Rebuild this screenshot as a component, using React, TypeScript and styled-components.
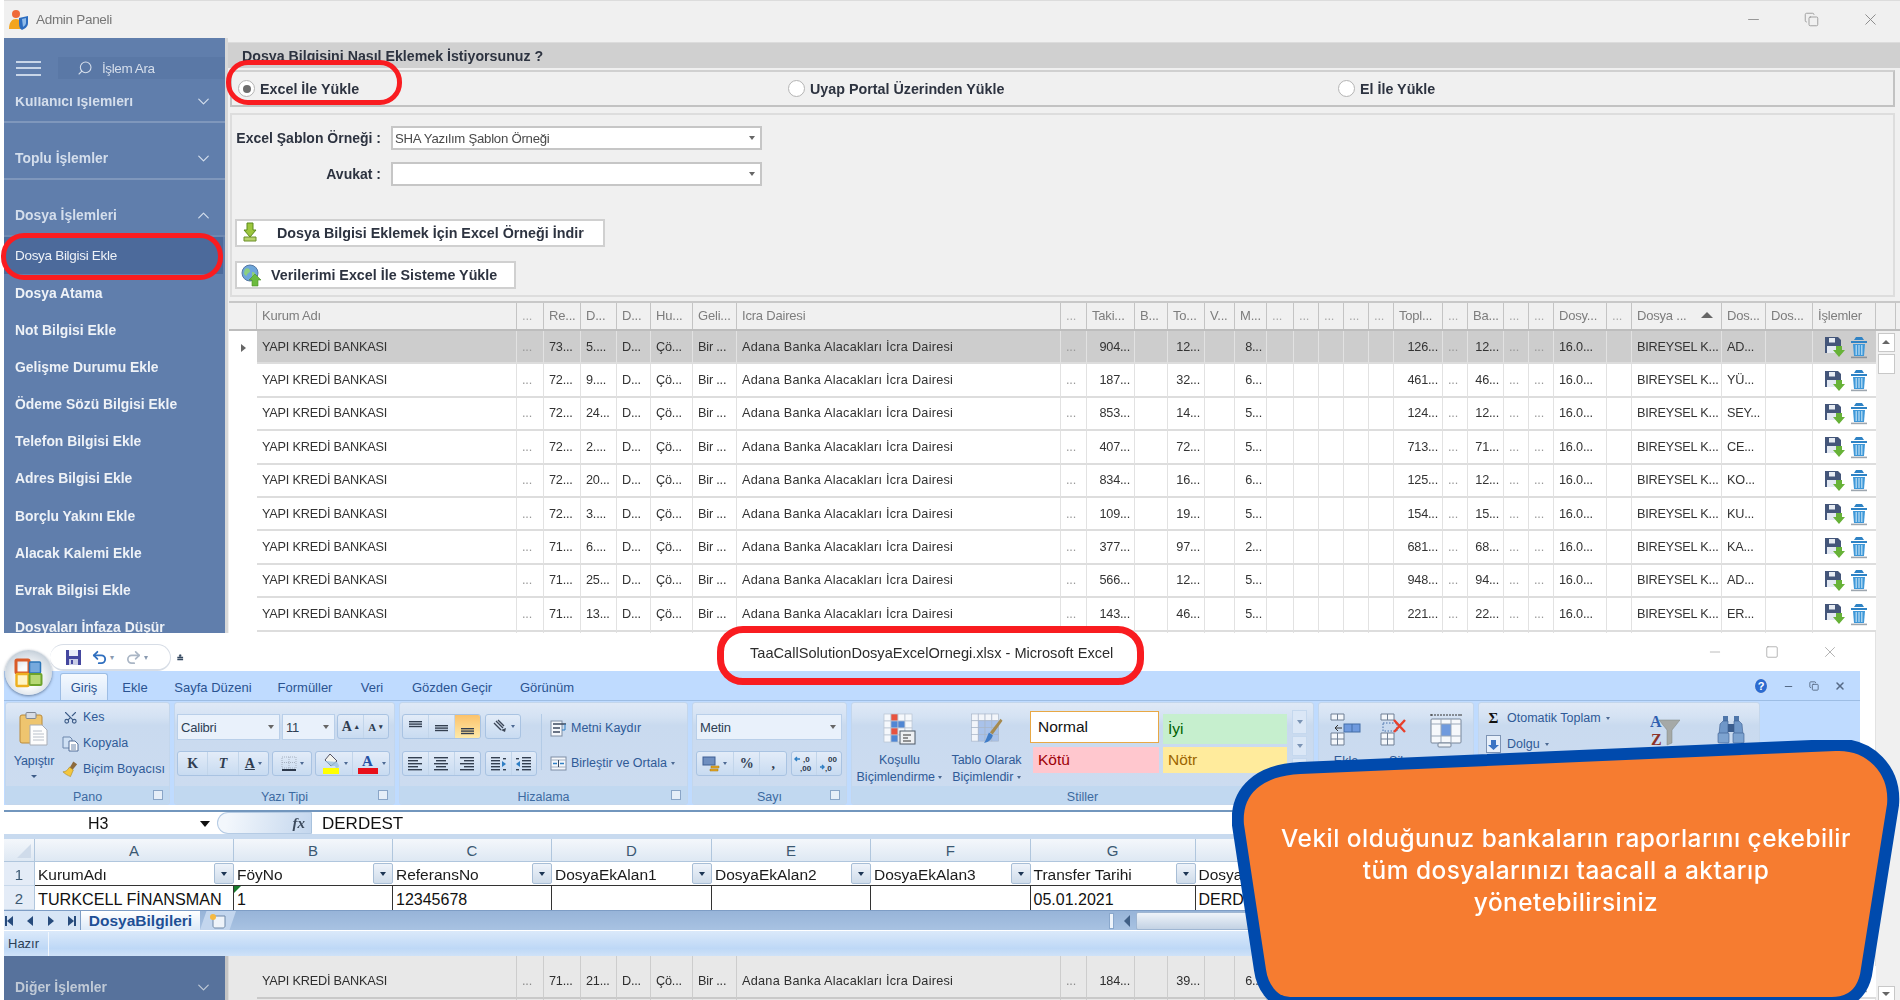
import React from 'react';
import styled, { createGlobalStyle, css } from 'styled-components';
import { ChevronDown, ChevronUp, Minus, Search, Square, X, Copy, Scissors, Undo2, Redo2 } from 'lucide-react';

const Global = createGlobalStyle`
  html, body { margin: 0; padding: 0; background: #fff; }
  #root { width: 1900px; height: 1000px; overflow: hidden; }
  * { box-sizing: border-box; }
`;

const UI = `"Liberation Sans", Arial, sans-serif`;

const Stage = styled.div`
  position: relative;
  width: 1900px;
  height: 1000px;
  overflow: hidden;
  background: #fff;
  font-family: ${UI};
`;

const AppWindow = styled.div`
  margin-left: 4px;
  width: 1896px;
  height: 1000px;
  display: flex;
  flex-direction: column;
  background: #f0f0f0;
  border-top: 1px solid #dcdcdc;
  filter: blur(0.45px);
`;

const TitleBar = styled.div`
  flex: 0 0 37px;
  display: flex;
  align-items: center;
  padding: 0 20px 0 4px;
  color: #777;
  font-size: 13.5px;
`;
const TitleText = styled.span`
  margin-left: 6px;
  letter-spacing: -0.3px;
`;
const WinControls = styled.div`
  margin-left: auto;
  display: flex;
  align-items: center;
  gap: 42px;
  color: #888;
`;

const Body = styled.div`
  flex: 1;
  display: flex;
  min-height: 0;
`;

const Sidebar = styled.nav`
  flex: 0 0 221px;
  height: 962px;
  background: #607eac;
  display: flex;
  flex-direction: column;
  padding-top: 19px;
  color: #e9eef5;
  overflow: hidden;
`;
const SideTop = styled.div`
  flex: 0 0 22px;
  display: flex;
  align-items: center;
`;
const Burger = styled.div`
  width: 25px;
  height: 15px;
  margin: 0 17px 0 12px;
  border-top: 2px solid #c9d6e8;
  border-bottom: 2px solid #c9d6e8;
  position: relative;
  &::after {
    content: '';
    position: absolute;
    left: 0;
    right: 0;
    top: 4.5px;
    height: 2px;
    background: #c9d6e8;
  }
`;
const SearchBox = styled.div`
  flex: 1;
  height: 22px;
  background: #5a78a6;
  display: flex;
  align-items: center;
  padding-left: 19px;
  gap: 9px;
  font-size: 13.5px;
  color: #d5deeb;
  letter-spacing: -0.4px;
`;
const FlippedSearch = styled(Search)`
  transform: scaleX(-1);
`;
const MenuScroll = styled.div`
  flex: 1;
  margin-top: 18px;
  overflow: hidden;
  display: flex;
  flex-direction: column;
  min-height: 0;
`;
const MenuHead = styled.div<{ $first?: boolean; $last?: boolean; $open?: boolean }>`
  flex: 0 0 57px;
  display: flex;
  align-items: center;
  padding: 24px 12px 9px 11px;
  border-bottom: 2px solid #7f97bc;
  font-weight: 700;
  font-size: 13.9px;
  color: #d4deec;
  ${p => p.$first && css`margin-top: -31px;`}
  ${p => p.$open && css`border-bottom-color: #6e89b2;`}
  ${p => p.$last && css`margin-top: auto; margin-bottom: -8px; border-bottom: 0;`}
  & > svg { margin-left: auto; color: #d4deec; }
`;
const MenuItem = styled.div<{ $active?: boolean }>`
  flex: 0 0 37.15px;
  display: flex;
  align-items: center;
  padding-left: 11px;
  font-size: 13.9px;
  font-weight: 700;
  color: #eef2f7;
  ${p => p.$active && css`
    background: #4c6a9b;
    margin-right: 2px;
    font-weight: 400;
    font-size: 13.5px;
    letter-spacing: -0.3px;
  `}
`;

const Main = styled.main`
  flex: 1;
  min-width: 0;
  border-left: 3px solid #d8d8d8;
  display: flex;
  flex-direction: column;
  padding-top: 4px;
`;
const Band = styled.div`
  flex: 0 0 26px;
  background: #d0d0d0;
  display: flex;
  align-items: center;
  padding-left: 14px;
  font-weight: 700;
  font-size: 14.2px;
  color: #2d3340;
  border-top: 1px solid #dcdcdc;
`;
const RadioPanel = styled.div`
  flex: 0 0 37px;
  margin: 2px 5px 0 2px;
  border: 2px solid #c2c2c2;
  border-top-color: #d0d0d0;
  display: grid;
  grid-template-columns: 550px 550px 1fr;
  align-items: center;
  padding-left: 6px;
`;
const RadioOption = styled.label`
  display: flex;
  align-items: center;
  gap: 5px;
  font-weight: 700;
  font-size: 14.3px;
  color: #2d3340;
`;
const RadioDot = styled.span<{ $on?: boolean }>`
  width: 17px;
  height: 17px;
  border-radius: 50%;
  background: #fff;
  border: 1.5px solid #b4b4b4;
  display: flex;
  align-items: center;
  justify-content: center;
  &::after {
    content: '';
    width: 8px;
    height: 8px;
    border-radius: 50%;
    background: ${p => (p.$on ? '#6d6d6d' : 'transparent')};
  }
`;
const FormPanel = styled.section`
  flex: 0 0 184px;
  margin: 6px 5px 0 2px;
  border: 2px solid #dddddd;
  padding: 11px 0 0 3px;
  display: flex;
  flex-direction: column;
`;
const FormRow = styled.div`
  display: flex;
  align-items: center;
  height: 24px;
  margin-bottom: 12px;
`;
const FormLabel = styled.span`
  width: 146px;
  text-align: right;
  font-weight: 700;
  font-size: 14px;
  color: #2d3340;
  margin-right: 10px;
  white-space: nowrap;
`;
const SelectBox = styled.div`
  width: 371px;
  height: 24px;
  background: #fff;
  border: 2px solid #c6c6c6;
  display: flex;
  align-items: center;
  padding: 0 5px 0 2px;
  font-size: 13.2px;
  color: #4a4a4a;
  letter-spacing: -0.25px;
`;
const Caret = styled.span`
  margin-left: auto;
  width: 0;
  height: 0;
  border-left: 3.5px solid transparent;
  border-right: 3.5px solid transparent;
  border-top: 4px solid #666;
`;
const FormButton = styled.button<{ $w: number; $pad: number; $mt: number }>`
  width: ${p => p.$w}px;
  height: 28px;
  margin-top: ${p => p.$mt}px;
  background: #fff;
  border: 2px solid #d0d0d0;
  display: flex;
  align-items: center;
  padding: 0 0 0 4px;
  font-family: ${UI};
  font-weight: 700;
  font-size: 14.3px;
  color: #2d3340;
  white-space: nowrap;
  & > span { margin-left: ${p => p.$pad}px; }
`;

const COLS = '28px 260px 27px 37px 36px 34px 42px 44px 324px 26px 48px 33px 37px 30px 32px 27px 25px 25px 25px 25px 49px 25px 36px 25px 25px 53px 25px 90px 44px 47px 63px';

const Table = styled.section`
  flex: 1;
  margin: 4px 0 0 1px;
  display: flex;
  flex-direction: column;
  border-top: 2px solid #c8c8c8;
  min-height: 0;
  overflow: hidden;
`;
const HeadRow = styled.div`
  flex: 0 0 28px;
  display: grid;
  grid-template-columns: ${COLS} 20px;
  border-bottom: 2px solid #bdbdbd;
`;
const HeadCell = styled.div<{ $dim?: boolean }>`
  display: flex;
  align-items: center;
  padding: 0 0 2px 5px;
  font-size: 13px;
  color: ${p => (p.$dim ? '#aaa' : '#7d7d7d')};
  letter-spacing: -0.2px;
  border-right: 1px solid #c4c4c4;
  white-space: nowrap;
  overflow: hidden;
`;
const SortArrow = styled.span`
  margin-left: auto;
  margin-right: 8px;
  width: 0;
  height: 0;
  border-left: 6px solid transparent;
  border-right: 6px solid transparent;
  border-bottom: 6px solid #666;
`;
const TableBody = styled.div`
  flex: 1;
  display: flex;
  min-height: 0;
`;
const Rows = styled.div`
  flex: 0 0 1647px;
  display: flex;
  flex-direction: column;
`;
const Row = styled.div<{ $tall?: number }>`
  flex: 0 0 ${p => p.$tall ?? 33.4}px;
  display: grid;
  grid-template-columns: ${COLS};
`;
const Indicator = styled.div<{ $on?: boolean }>`
  background: #fff;
  display: flex;
  align-items: center;
  justify-content: center;
  &::after {
    content: '';
    display: ${p => (p.$on ? 'block' : 'none')};
    border-top: 4px solid transparent;
    border-bottom: 4px solid transparent;
    border-left: 5px solid #666;
  }
`;
const Cell = styled.div<{ $sel?: boolean; $end?: boolean; $dim?: boolean; $plain?: boolean; $wide?: boolean }>`
  display: flex;
  align-items: center;
  justify-content: ${p => (p.$end ? 'flex-end' : 'flex-start')};
  padding: 0 ${p => (p.$end ? 4 : 2)}px 0 5px;
  background: ${p => (p.$sel ? '#cdcdcd' : '#fff')};
  border-right: 1px solid #e2e2e2;
  border-bottom: ${p => (p.$plain ? 0 : '2px solid #dddddd')};
  font-size: 12.7px;
  color: ${p => (p.$dim ? '#999' : '#333')};
  letter-spacing: ${p => (p.$wide ? '0.25px' : '-0.2px')};
  white-space: nowrap;
  overflow: hidden;
`;
const ActionCell = styled(Cell)`
  padding: 0 0 0 11px;
  gap: 4px;
  border-right: 0;
`;
const VScroll = styled.div`
  flex: 0 0 20px;
  background: #f0f0f0;
  display: flex;
  flex-direction: column;
  align-items: center;
  padding: 2px 0 0 0;
  height: 670px;
`;
const ScrollBtn = styled.div<{ $down?: boolean; $h: number; $mt?: number }>`
  width: 17px;
  height: ${p => p.$h}px;
  margin-top: ${p => p.$mt ?? 0}px;
  background: #fff;
  border: 1.5px solid #c8c8c8;
  display: flex;
  align-items: center;
  justify-content: center;
  &::after {
    content: '';
    display: ${p => (p.$h > 19 ? 'none' : 'block')};
    border-left: 4px solid transparent;
    border-right: 4px solid transparent;
    ${p => (p.$down ? 'border-top: 4px solid #666;' : 'border-bottom: 4px solid #666;')}
  }
`;

const Dim = styled.div`
  position: absolute;
  left: 4px;
  top: 956px;
  width: 1856px;
  height: 44px;
  background: rgba(0, 0, 0, 0.09);
`;

const Mark = styled.div<{ $l: number; $t: number; $w: number; $h: number; $s: number; $r: number }>`
  position: absolute;
  left: ${p => p.$l}px;
  top: ${p => p.$t}px;
  width: ${p => p.$w}px;
  height: ${p => p.$h}px;
  border: ${p => p.$s}px solid #f91c20;
  border-radius: ${p => p.$r}px;
`;

/* Excel window */
const Excel = styled.div`
  position: absolute;
  left: 4px;
  top: 633px;
  width: 1856px;
  height: 323px;
  background: #fff;
  border-radius: 0 8px 0 0;
  display: flex;
  flex-direction: column;
  filter: blur(0.4px);
`;
const XTitle = styled.div`
  flex: 0 0 38px;
  position: relative;
  display: flex;
  align-items: center;
  border-radius: 0 8px 0 0;
`;
const OfficeOrb = styled.div`
  position: absolute;
  left: 1px;
  top: 17px;
  width: 47px;
  height: 45px;
  border-radius: 50%;
  background: radial-gradient(circle at 50% 60%, #fbfcfd 30%, #d3dbe3 65%, #9fb0be 100%);
  box-shadow: 0 1px 3px rgba(40, 60, 90, .6);
  z-index: 3;
  display: flex;
  align-items: center;
  justify-content: center;
`;
const Qat = styled.div`
  margin: 11px 0 0 46px;
  width: 121px;
  height: 27px;
  border: 1.5px solid #d7dde6;
  border-left: 0;
  border-bottom: 2px solid #d7dde6;
  border-radius: 14px;
  display: flex;
  align-items: center;
  padding-left: 15px;
  gap: 2px;
  color: #8a9ab0;
  font-size: 8px;
`;
const QatIcon = styled.span<{ $ml: number }>`
  display: flex;
  margin-left: ${p => p.$ml}px;
`;
const QatExtra = styled.span`
  margin: 11px 0 0 6px;
  font-size: 11px;
  color: #33475f;
  font-weight: 700;
  line-height: 1;
`;
const XTitleText = styled.div`
  position: absolute;
  left: 746px;
  top: 11px;
  font-size: 14.6px;
  line-height: 18px;
  color: #2c2c2c;
  white-space: nowrap;
`;
const XControls = styled.div`
  margin-left: auto;
  display: flex;
  gap: 42px;
  align-items: center;
  padding-right: 21px;
  color: #9a9a9a;
`;
const XTabs = styled.div`
  flex: 0 0 29px;
  background: #bfdbff;
  display: flex;
  align-items: flex-end;
  padding-left: 56px;
  font-size: 13px;
  color: #2a5391;
`;
const XTab = styled.div<{ $active?: boolean; $w: number }>`
  width: ${p => p.$w}px;
  height: 27px;
  padding-top: 1px;
  display: flex;
  align-items: center;
  justify-content: center;
  ${p => p.$active && css`
    background: linear-gradient(#f5f9fe, #d9e8fa);
    border: 1px solid #9dbde4;
    border-bottom: 0;
    border-radius: 3px 3px 0 0;
  `}
`;
const HelpTools = styled.div`
  margin: 0 14px 6px auto;
  display: flex;
  align-items: center;
  gap: 15px;
  color: #566a86;
  font-weight: 700;
`;
const HelpOrb = styled.span`
  width: 14px;
  height: 16px;
  border-radius: 50%;
  background: #2c6bd0;
  border: 1.5px solid #cfe0f6;
  color: #fff;
  font-size: 11px;
  display: flex;
  align-items: center;
  justify-content: center;
`;
const Ribbon = styled.div`
  flex: 0 0 105px;
  min-height: 0;
  background: #bfdbff;
  border-top: 1px solid #9dbde4;
  display: flex;
  gap: 4px;
  padding: 1px 0 0 1px;
`;
const Group = styled.div<{ $w: number }>`
  flex: 0 0 ${p => p.$w}px;
  display: flex;
  flex-direction: column;
  border: 1px solid #c3d6ec;
  border-radius: 3px;
  background: linear-gradient(#dfe9f6 0, #d4e2f3 14%, #c9daef 22%, #cddcf0 100%);
  overflow: hidden;
`;
const GroupBody = styled.div<{ $p?: string }>`
  flex: 0 0 83px;
  min-height: 0;
  display: flex;
  padding: ${p => p.$p ?? '0'};
`;
const GroupLabel = styled.div`
  position: relative;
  flex: 1;
  background: #c1d8f0;
  display: flex;
  align-items: center;
  justify-content: center;
  padding-top: 3px;
  font-size: 12.5px;
  color: #3d6aa0;
`;
const Launcher = styled.span`
  position: absolute;
  right: 6px;
  top: 4px;
  width: 10px;
  height: 10px;
  border: 1px solid #8aa5c7;
  background: #e6eef8;
`;
const PasteCol = styled.div`
  flex: 0 0 56px;
  display: flex;
  flex-direction: column;
  align-items: center;
  padding-top: 8px;
  font-size: 12.5px;
  color: #2f5a97;
  letter-spacing: -0.2px;
`;
const PasteText = styled.span`
  margin-top: 8px;
`;
const TinyDown = styled.span`
  display: block;
  margin-top: 7px;
  border-left: 3px solid transparent;
  border-right: 3px solid transparent;
  border-top: 3px solid #3d5c88;
`;
const SmallList = styled.div<{ $w?: number }>`
  padding: 1px 0 0 0;
  display: flex;
  flex-direction: column;
  ${p => p.$w && css`width: ${p.$w}px;`}
`;
const SmallItem = styled.div<{ $gap?: number; $h?: number }>`
  height: ${p => p.$h ?? 26}px;
  display: flex;
  align-items: center;
  gap: ${p => p.$gap ?? 4}px;
  font-size: 12.5px;
  color: #2f5a97;
  white-space: nowrap;
`;
const SmallIcon = styled.span`
  width: 17px;
  height: 17px;
  display: flex;
  align-items: center;
  justify-content: center;
  color: #3d5c88;
`;
const SigmaIcon = styled(SmallIcon)`
  font-family: "Liberation Serif", serif;
  font-weight: 700;
  font-size: 15px;
  color: #111;
`;
const ScissorsIcon = styled(Scissors)`
  transform: rotate(-90deg);
`;
const ToolStack = styled.div`
  display: flex;
  flex-direction: column;
  gap: 11px;
`;
const ToolRow = styled.div<{ $gap?: number }>`
  display: flex;
  height: 26px;
  gap: ${p => p.$gap ?? 3}px;
`;
const Combo = styled.div<{ $w: number }>`
  width: ${p => p.$w}px;
  height: 26px;
  background: #e9f1fb;
  border: 1px solid #b9cfe9;
  display: flex;
  align-items: center;
  padding: 0 5px 0 3px;
  font-size: 13px;
  color: #2e3f55;
  letter-spacing: -0.2px;
`;
const ToolBox = styled.div<{ $w: number }>`
  width: ${p => p.$w}px;
  height: 25px;
  display: flex;
  align-items: stretch;
  border: 1px solid #a9c3e2;
  border-radius: 3px;
  background: linear-gradient(#e3ecf8, #c8dbf1);
  overflow: hidden;
`;
const ToolBtn = styled.div<{ $hot?: boolean; $grow?: number; $italic?: boolean; $small?: boolean }>`
  flex: ${p => p.$grow ?? 1};
  display: flex;
  align-items: center;
  justify-content: center;
  gap: 3px;
  border-right: 1px solid #c2d5ea;
  &:last-child { border-right: 0; }
  font-family: "Liberation Serif", serif;
  font-weight: 700;
  font-size: ${p => (p.$small ? 11 : 14)}px;
  font-style: ${p => (p.$italic ? 'italic' : 'normal')};
  color: #2f3c50;
  ${p => p.$hot && css`background: linear-gradient(#fbc26b, #fde9a9);`}
`;
const Underlined = styled.span`
  text-decoration: underline;
`;
const MiniSup = styled.sup`
  font-size: 7px;
`;
const ColorGlyph = styled.span`
  position: relative;
  display: flex;
  width: 22px;
  height: 22px;
  justify-content: center;
  color: #2451a4;
  font-size: 15px;
`;
const ColorBar = styled.span`
  position: absolute;
  left: 1px;
  right: 1px;
  bottom: 1px;
  height: 6px;
  background: #e8101a;
`;
const Arrowlet = styled.i<{ $inline?: boolean }>`
  display: ${p => (p.$inline ? 'inline-block' : 'block')};
  vertical-align: middle;
  border-left: 2.5px solid transparent;
  border-right: 2.5px solid transparent;
  border-top: 3px solid #4d6a93;
`;
const VSep = styled.span`
  width: 1px;
  height: 56px;
  background: #b3cbe6;
  margin: 0 8px 0 4px;
`;
const LargeBtn = styled.div<{ $w: number; $ml?: number }>`
  flex: 0 0 ${p => p.$w}px;
  margin-left: ${p => p.$ml ?? 0}px;
  display: flex;
  flex-direction: column;
  align-items: center;
  padding-top: 10px;
  font-size: 12.5px;
  line-height: 17px;
  color: #2f5a97;
  white-space: nowrap;
`;
const LargeText = styled.span`
  margin-top: 7px;
  text-align: center;
  display: inline-flex;
  flex-direction: column;
  align-items: center;
`;
const Gallery = styled.div`
  display: grid;
  grid-template-columns: 129px 124px;
  grid-template-rows: 32px 26px;
  gap: 4px;
  margin-top: 8px;
  font-size: 15.5px;
`;
const Style1 = styled.div<{ $bg: string; $fg: string; $normal?: boolean }>`
  background: ${p => p.$bg};
  color: ${p => p.$fg};
  display: flex;
  align-items: center;
  padding-left: 5px;
  ${p => p.$normal ? css`border: 1.5px solid #e8a845; padding-left: 7px;` : css`margin: 3px 0 -1px 0;`}
`;
const Style2 = styled(Style1)`
  margin: 0 0 0 3px;
  height: 26px;
`;
const Style3 = styled(Style1)`
  margin: 0;
  height: 26px;
`;
const GalleryScroll = styled.div`
  margin: 7px 0 0 5px;
  width: 15px;
  display: flex;
  flex-direction: column;
  gap: 2px;
`;
const GalBtn = styled.div<{ $h: number }>`
  height: ${p => p.$h}px;
  background: #dbe7f6;
  border: 1px solid #c5d8ee;
  display: flex;
  align-items: center;
  justify-content: center;
  &::after {
    content: '';
    border-left: 3px solid transparent;
    border-right: 3px solid transparent;
    border-top: 4px solid #7b94b5;
  }
`;
const WhiteGap = styled.div`
  flex: 0 0 5px;
`;
const FormulaBar = styled.div`
  flex: 0 0 24px;
  display: flex;
  border-top: 2px solid #7296bd;
`;
const NameBox = styled.div`
  flex: 0 0 213px;
  display: flex;
  align-items: center;
  padding: 2px 7px 0 84px;
  font-size: 16px;
  color: #111;
`;
const NameCaret = styled.span`
  margin-left: auto;
  border-left: 5px solid transparent;
  border-right: 5px solid transparent;
  border-top: 6px solid #111;
`;
const FxPill = styled.div`
  flex: 0 0 95px;
  border-radius: 11px 0 0 11px;
  border: 1px solid #b5cbe4;
  border-right: 1px solid #a8c2dd;
  background: linear-gradient(100deg, #f3f7fc 10%, #c4d7ee 100%);
  display: flex;
  align-items: center;
  justify-content: flex-end;
  padding-right: 6px;
  font-family: "Liberation Serif", serif;
  font-style: italic;
  font-weight: 700;
  font-size: 15px;
  color: #3c4a5c;
`;
const FormulaText = styled.div`
  padding: 2px 0 0 10px;
  font-size: 17px;
  line-height: 20px;
  color: #111;
`;
const SheetGap = styled.div`
  flex: 0 0 5px;
  background: #c8daef;
`;
const SHEET = '31px 199px 159px 159px 160px 159px 159.5px 165px 1fr';
const ColHead = styled.div`
  flex: 0 0 23px;
  display: grid;
  grid-template-columns: ${SHEET};
`;
const ColCell = styled.div<{ $corner?: boolean }>`
  background: linear-gradient(#f4f7fb, #dee8f3);
  border-right: 1px solid #b0c6dd;
  border-bottom: 1px solid #b0c6dd;
  display: flex;
  align-items: center;
  justify-content: center;
  padding-top: 1px;
  font-size: 15px;
  color: #3b5872;
  position: relative;
  ${p => p.$corner && css`
    &::after {
      content: '';
      position: absolute;
      right: 3px;
      bottom: 3px;
      border-left: 14px solid transparent;
      border-bottom: 14px solid #cfdbea;
    }
  `}
`;
const SheetRow = styled.div`
  flex: 0 0 24px;
  display: grid;
  grid-template-columns: ${SHEET};
`;
const RowNum = styled.div`
  background: #e4ecf7;
  border-right: 1px solid #b0c6dd;
  border-bottom: 1px solid #c8d8ea;
  display: flex;
  align-items: center;
  justify-content: center;
  padding-top: 2px;
  font-size: 15px;
  color: #3b5872;
`;
const HeaderCell = styled.div`
  display: flex;
  align-items: center;
  padding: 0 0 0 3px;
  font-size: 15.5px;
  color: #1a1a1a;
  border-bottom: 1.5px solid #333;
  white-space: nowrap;
  overflow: hidden;
`;
const HeaderName = styled.span`
  padding-top: 3px;
`;
const FilterBtn = styled.span`
  margin-left: auto;
  flex: 0 0 20px;
  height: 21px;
  background: linear-gradient(#eef3fa, #cfdcea);
  border: 1px solid #a8bed6;
  border-radius: 2px;
  display: flex;
  align-items: center;
  justify-content: center;
  &::after {
    content: '';
    border-left: 3.5px solid transparent;
    border-right: 3.5px solid transparent;
    border-top: 4px solid #1c3554;
  }
`;
const DataCell = styled.div<{ $tick?: boolean; $big?: boolean }>`
  display: flex;
  align-items: center;
  padding: 3px 0 0 3px;
  font-size: ${p => (p.$big ? 16.2 : 16)}px;
  color: #111;
  border-right: 1.5px solid #333;
  white-space: nowrap;
  overflow: hidden;
  position: relative;
  ${p => p.$tick && css`
    &::before {
      content: '';
      position: absolute;
      left: 0;
      top: 0;
      border-right: 7px solid transparent;
      border-top: 7px solid #177a2a;
    }
  `}
`;
const SheetTabs = styled.div`
  flex: 0 0 20px;
  background: linear-gradient(#97b4d8, #a8c2e2);
  border-top: 1px solid #7e9dc5;
  display: flex;
  align-items: stretch;
`;
const TabNav = styled.div`
  flex: 0 0 76px;
  display: flex;
  align-items: center;
  justify-content: space-between;
  padding: 0 6px 0 3px;
  background: #d7e5f6;
`;
const NavGlyph = styled.span<{ $dir: 'l' | 'r'; $bar?: boolean }>`
  display: block;
  border-top: 5px solid transparent;
  border-bottom: 5px solid transparent;
  ${p => (p.$dir === 'l' ? 'border-right: 6px solid #274b7c;' : 'border-left: 6px solid #274b7c;')}
  ${p => p.$bar && (p.$dir === 'l' ? 'box-shadow: -2px 0 0 0 #274b7c;' : 'box-shadow: 2px 0 0 0 #274b7c;')}
`;
const SheetTab = styled.div`
  flex: 0 0 120px;
  background: linear-gradient(#fff, #dce9f8);
  border-left: 1px solid #7e9dc5;
  display: flex;
  align-items: center;
  justify-content: center;
  font-weight: 700;
  font-size: 15.5px;
  color: #1e4f95;
  white-space: nowrap;
`;
const NewTab = styled.div`
  flex: 0 0 36px;
  background: #c3d6ee;
  clip-path: polygon(18% 0, 100% 0, 82% 100%, 0 100%);
  display: flex;
  align-items: center;
  justify-content: center;
`;
const HScroll = styled.div`
  margin-left: auto;
  flex: 0 0 751px;
  display: flex;
  align-items: center;
`;
const Splitter = styled.span`
  width: 5px;
  height: 16px;
  background: #eef4fb;
  border: 1px solid #8aa8cd;
`;
const HArrow = styled.span`
  margin-left: 10px;
  border-top: 6px solid transparent;
  border-bottom: 6px solid transparent;
  border-right: 6px solid #405f86;
`;
const HThumb = styled.span`
  margin-left: 6px;
  flex: 1;
  height: 18px;
  background: linear-gradient(#eef3f9, #c3d2e4);
  border: 1px solid #9fb6d2;
  border-radius: 2px;
`;
const StatusBar = styled.div`
  flex: 1;
  margin-top: 1px;
  background: linear-gradient(#dbe9fa, #bed8f6 70%, #cfe2f8);
  display: flex;
  align-items: center;
  padding-left: 4px;
  font-size: 13px;
  color: #2b3e55;
`;
const StatusText = styled.span`
  padding-right: 9px;
  line-height: 24px;
  border-right: 1px solid #f2f7fd;
`;

/* Callout */
const Callout = styled.aside`
  position: absolute;
  left: 1232px;
  top: 740px;
  width: 668px;
  height: 260px;
`;
const CalloutShape = styled.svg`
  position: absolute;
  inset: 0;
  width: 100%;
  height: 100%;
`;
const CalloutText = styled.p`
  position: relative;
  margin: 0;
  padding-top: 82px;
  text-align: center;
  font-family: Inter, "Open Sans", sans-serif;
  font-size: 24.4px;
  font-weight: 500;
  line-height: 32px;
  letter-spacing: 0.5px;
  color: #fff;
`;

/* ---------- drawings ---------- */
const SaveArrow = () => (
  <svg width="21" height="23" viewBox="0 0 21 23">
    <path d="M1 2h13l3 3v13H1z" fill="#44567a" />
    <rect x="5" y="3" width="6" height="4.5" fill="#e7ecf3" />
    <rect x="3" y="11" width="9" height="7" fill="#e3e9f2" />
    <path d="M12 11h6v4h3l-6 7-6-7h3z" fill="#67b238" />
  </svg>
);
const Trash = () => (
  <svg width="20" height="24" viewBox="0 0 20 24">
    <path d="M2 6h16v2H2z M7 2l6 0 2 3H5z" fill="#2f83c5" />
    <path d="M4 9h12l-1 12H5z" fill="#3f98d8" />
    <path d="M7.2 10v10M10 10v10M12.8 10v10" stroke="#bfe0f6" strokeWidth="1.2" />
    <rect x="2" y="21.6" width="16" height="1.6" fill="#5b6b7a" opacity=".6" />
  </svg>
);
const GreenDown = () => (
  <svg width="18" height="22" viewBox="0 0 18 22">
    <path d="M6 1h6v7h3l-6 7-6-7h3z" fill="#9cc63c" stroke="#5b8a1c" />
    <path d="M3 15h12v4H3z" fill="#b7d36a" stroke="#6b8e28" />
  </svg>
);
const GlobeUp = () => (
  <svg width="22" height="24" viewBox="0 0 22 24">
    <circle cx="9" cy="10" r="8" fill="#6ea6da" stroke="#5578a3" />
    <path d="M4 6c3-2 5 0 5 2s-3 2-3 4-3 0-3-2zM11 9c3 0 4 2 3 5l-3 2z" fill="#8ccf7f" />
    <path d="M14 11l6 6h-3v6h-6v-6H8z" fill="#6bbb3e" stroke="#4b8d26" strokeWidth=".6" />
  </svg>
);
const AdminLogo = () => (
  <svg width="22" height="22" viewBox="0 0 22 22">
    <circle cx="8" cy="5" r="4" fill="#ef6a3a" />
    <path d="M1 20c0-7 3-10 7-10s6 3 6 10z" fill="#f4a51d" />
    <path d="M11 9l9-2v7c0 4-4 6-6 7-2-1-3-3-3-7z" fill="#2b6cc0" />
    <path d="M14 10l4-1v5c0 2-2 3-3 4z" fill="#8fbbe9" />
  </svg>
);
const OfficeLogo = () => (
  <svg width="30" height="30" viewBox="0 0 30 30">
    <rect x="2" y="2" width="13" height="13" rx="1" fill="none" stroke="#d95b28" strokeWidth="3" />
    <rect x="15.5" y="4" width="11" height="11" rx="1" fill="#76a9dd" stroke="#2c75b8" strokeWidth="1.5" />
    <rect x="2.5" y="16" width="12" height="12" rx="1" fill="#fff4c4" stroke="#eeb01f" strokeWidth="2.4" />
    <rect x="15.5" y="16" width="12" height="11" rx="1" fill="#b7d875" stroke="#6da32b" strokeWidth="2" />
  </svg>
);
const Floppy = () => (
  <svg width="17" height="17" viewBox="0 0 17 17">
    <rect x="1" y="1" width="15" height="15" fill="#44479f" />
    <rect x="4" y="1" width="9" height="6" fill="#e9ecf8" />
    <rect x="4" y="10" width="9" height="6" fill="#c9cde6" />
    <rect x="6" y="11" width="2" height="4" fill="#44479f" />
  </svg>
);
const PasteIcon = () => (
  <svg width="30" height="35" viewBox="0 0 30 35">
    <rect x="1" y="4" width="22" height="28" rx="2" fill="#eec56f" stroke="#ba8a3a" />
    <rect x="7" y="1.5" width="10" height="6" rx="1" fill="#d7dce4" stroke="#7f8794" />
    <path d="M11 14h12l5 5v15H11z" fill="#fdfdfd" stroke="#a8adb6" />
    <path d="M14 20h9M14 23h11M14 26h11M14 29h11" stroke="#b9c0ca" />
  </svg>
);
const DocsIcon = () => (
  <svg width="17" height="17" viewBox="0 0 17 17">
    <path d="M1 2h7l2 2v9H1z" fill="#cfe0f4" stroke="#6d87ac" />
    <path d="M7 6h6l3 3v7H7z" fill="#fff" stroke="#526f99" />
    <path d="M9 10h5M9 12h5M9 14h5" stroke="#6d87ac" />
  </svg>
);
const BrushIcon = () => (
  <svg width="18" height="18" viewBox="0 0 18 18">
    <path d="M12 1l4 3-5 6-3-2z" fill="#8c6a3d" />
    <path d="M8 7l4 3-3 7c-3-1-6-3-8-5 3 0 5-2 7-5z" fill="#f3c63e" stroke="#a88320" strokeWidth=".6" />
  </svg>
);
const Lines = ({ rows }: { rows: { x: number; y: number; w: number }[] }) => (
  <svg width="17" height="16" viewBox="0 0 17 16">
    {rows.map((r, i) => <rect key={i} x={r.x} y={r.y} width={r.w} height="1.4" fill="#333f50" />)}
  </svg>
);
const vAlign = (y: number) => [0, 1, 2].map(i => ({ x: 2, y: y + i * 2.4, w: 13 }));
const hAlign = (mode: 'l' | 'c' | 'r') => [0, 1, 2, 3, 4].map(i => {
  const w = i % 2 === 0 ? 14 : 10;
  const x = mode === 'l' ? 1 : mode === 'c' ? 8 - w / 2 : 15 - w;
  return { x, y: 1 + i * 3, w };
});
const Indent = ({ flip }: { flip?: boolean }) => (
  <svg width="17" height="16" viewBox="0 0 17 16">
    <g transform={flip ? 'translate(17,0) scale(-1,1)' : undefined}>
      {[1, 4, 7, 10, 13].map(y => <rect key={y} x="7" y={y} width="9" height="1.4" fill="#333f50" />)}
      <path d="M1 8l4-3v6z" fill="#2f7fc4" />
      <rect x="1" y="2" width="3" height="1.4" fill="#333f50" />
      <rect x="1" y="13" width="3" height="1.4" fill="#333f50" />
    </g>
  </svg>
);
const Orient = () => (
  <svg width="17" height="16" viewBox="0 0 17 16">
    <path d="M3 4l7 7M5 2l7 7M7 1l6 6" stroke="#3b4657" strokeWidth="1.4" fill="none" />
    <path d="M10 11l5-2-1 4z" fill="#3b4657" />
  </svg>
);
const WrapIcon = () => (
  <svg width="17" height="17" viewBox="0 0 17 17">
    <rect x="1" y="1" width="11" height="15" fill="#f4f7fb" stroke="#7e8da3" />
    <path d="M3 4h13M3 8h7M3 12h7" stroke="#3c4a5f" strokeWidth="1.3" />
    <path d="M15 4v6h-3" stroke="#2f7fc4" fill="none" />
  </svg>
);
const MergeIcon = () => (
  <svg width="17" height="17" viewBox="0 0 17 17">
    <rect x="1" y="2" width="15" height="13" fill="#f4f7fb" stroke="#7e8da3" />
    <path d="M1 5h15M1 12h15" stroke="#a2afc0" />
    <path d="M3 8.5h4M14 8.5h-4" stroke="#2f7fc4" strokeWidth="1.4" />
    <path d="M8.5 5v7" stroke="#3c4a5f" />
  </svg>
);
const FillBucket = () => (
  <svg width="20" height="21" viewBox="0 0 20 21">
    <path d="M9 1l7 7-6 5-6-6z" fill="#f4f4ee" stroke="#556" />
    <path d="M4 8l12 1c0 0 2 3 2 4a2 2 0 0 1-4 0l-4 0z" fill="#9cc0de" opacity=".8" />
    <rect x="2" y="15" width="16" height="6" fill="#ffff00" />
  </svg>
);
const BorderIcon = () => (
  <svg width="16" height="16" viewBox="0 0 16 16">
    <rect x="1" y="1" width="14" height="11" fill="none" stroke="#a6b1c0" strokeDasharray="1 1" />
    <path d="M8 1v11M1 6.5h14" stroke="#a6b1c0" strokeDasharray="1 1" />
    <rect x="1" y="13" width="14" height="2" fill="#2d3a4d" />
  </svg>
);
const MoneyIcon = () => (
  <svg width="18" height="18" viewBox="0 0 18 18">
    <rect x="1" y="2" width="12" height="8" fill="#6f8fc0" stroke="#3e5f93" />
    <path d="M9 11h8v2H9zM8 14h8v2H8z" fill="#e8a823" stroke="#a27512" strokeWidth=".5" />
  </svg>
);
const DecimalGlyph = ({ flip }: { flip?: boolean }) => (
  <svg width="20" height="20" viewBox="0 0 20 20" fontFamily="Liberation Sans" fontSize="8" fontWeight="700" fill="#2d3a4d">
    <text x="9" y="8">{flip ? '00' : ',0'}</text>
    <text x="6" y="17">{flip ? ',0' : ',00'}</text>
    <path d={flip ? 'M1 13h4M3 11l2 2-2 2' : 'M6 5H1M3 3L1 5l2 2'} stroke="#2f7fc4" strokeWidth="1.4" fill="none" />
  </svg>
);
const CondIcon = () => (
  <svg width="33" height="32" viewBox="0 0 33 32">
    {[0, 1, 2, 3].map(r => [0, 1, 2, 3].map(c => (
      <rect key={`${r}${c}`} x={1 + c * 7} y={1 + r * 7} width="7" height="7" fill={c === 1 ? (r % 2 === 0 ? '#e8533f' : '#4f86d4') : (r === 1 && c === 2) ? '#4f86d4' : '#f5f8fc'} stroke="#b8c3d2" strokeWidth=".7" />
    )))}
    <rect x="17" y="18" width="15" height="13" fill="#eef0f3" stroke="#4d5866" />
    <path d="M20 22h8M20 25h5M20 28h8" stroke="#333" strokeWidth="1.2" />
  </svg>
);
const TableIcon = () => (
  <svg width="33" height="33" viewBox="0 0 33 33">
    {[0, 1, 2, 3].map(r => [0, 1, 2, 3].map(c => (
      <rect key={`${r}${c}`} x={1 + c * 7} y={1 + r * 7} width="7" height="7" fill={r > 0 && c > 0 ? '#a9c2ea' : '#f2f5fa'} stroke="#a9b6c9" strokeWidth=".7" />
    )))}
    <path d="M31 6l2 2-10 14-3-2z" fill="#a68a4f" />
    <path d="M19 20l4 3c-1 4-4 7-9 8 2-3 3-7 5-11z" fill="#3f7cc7" />
  </svg>
);
const CellsInsert = () => (
  <svg width="32" height="33" viewBox="0 0 32 33">
    <path d="M1 1h13v6H1zM7.5 1v6M1 20h13v12H1zM1 26h13M7.5 20v12" fill="#f4f7fb" stroke="#6f7f94" />
    <rect x="14" y="11" width="16" height="8" fill="#6f9ade" stroke="#456fa8" />
    <path d="M22 11v8" stroke="#456fa8" />
    <path d="M12 15H6M8 12l-3 3 3 3" stroke="#333" fill="none" />
  </svg>
);
const CellsDelete = () => (
  <svg width="32" height="33" viewBox="0 0 32 33">
    <path d="M1 1h13v6H1zM7.5 1v6M1 20h13v12H1zM1 26h13M7.5 20v12" fill="#f4f7fb" stroke="#6f7f94" />
    <rect x="3" y="10" width="14" height="8" fill="none" stroke="#456fa8" strokeDasharray="1.5 1.5" />
    <path d="M14 7l11 12M25 7L14 19" stroke="#e8402c" strokeWidth="2.4" />
  </svg>
);
const CellsFormat = () => (
  <svg width="32" height="35" viewBox="0 0 32 35">
    <path d="M1 2h30M1 1v3M31 1v3" stroke="#333" strokeDasharray="2 1" />
    <rect x="1" y="6" width="30" height="24" rx="1" fill="#f6f8fb" stroke="#778599" />
    <rect x="11" y="11" width="10" height="12" fill="#6f9ade" />
    <path d="M11 6v24M21 6v24M1 11h30M1 23h30" stroke="#9aa7b8" />
    <rect x="8" y="30" width="13" height="4" rx="1" fill="#eef2f7" stroke="#778599" />
  </svg>
);
const SortFunnel = () => (
  <svg width="30" height="33" viewBox="0 0 30 33" fontFamily="Liberation Serif" fontWeight="700" fontSize="16">
    <text x="0" y="13" fill="#2f5fb0">A</text>
    <text x="1" y="31" fill="#8c3329">Z</text>
    <path d="M9 6h21l-8 10v13l-5 2V16z" fill="#a5a9a7" stroke="#7e8482" strokeWidth=".5" />
  </svg>
);
const Binoculars = () => (
  <svg width="28" height="30" viewBox="0 0 28 30">
    <path d="M6 2h5v6H6zM17 2h5v6h-5z" fill="#4e76aa" />
    <path d="M3 10l3-3h5v14H2zM25 10l-3-3h-5v14h9z" fill="#6f97c8" stroke="#3a5d8e" strokeWidth=".6" />
    <rect x="1" y="19" width="11" height="10" rx="1" fill="#7da3d0" stroke="#3a5d8e" strokeWidth=".6" />
    <rect x="16" y="19" width="11" height="10" rx="1" fill="#7da3d0" stroke="#3a5d8e" strokeWidth=".6" />
    <rect x="11" y="10" width="6" height="8" fill="#3a5d8e" />
  </svg>
);
const DolguIcon = () => (
  <svg width="15" height="18" viewBox="0 0 15 18">
    <rect x=".5" y=".5" width="14" height="17" fill="#e8f0fa" stroke="#7e94b4" />
    <path d="M5 5h5v5h3l-5.5 5-5.5-5h3z" fill="#3b74c4" />
  </svg>
);
const NewSheetIcon = () => (
  <svg width="18" height="16" viewBox="0 0 18 16">
    <path d="M4 3h12v10c0 1-1 2-2 2H6c-1 0-2-1-2-2z" fill="#eef3f9" stroke="#6f88a8" />
    <circle cx="4" cy="4" r="3" fill="#f5b942" />
  </svg>
);

type RowData = [string, string, string, string, string, string, string, string];
const rows: RowData[] = [
  ['73...', '5....', '904...', '12...', '8...', '126...', '12...', 'AD...'],
  ['72...', '9....', '187...', '32...', '6...', '461...', '46...', 'YÜ...'],
  ['72...', '24...', '853...', '14...', '5...', '124...', '12...', 'SEY...'],
  ['72...', '2....', '407...', '72...', '5...', '713...', '71...', 'CE...'],
  ['72...', '20...', '834...', '16...', '6...', '125...', '12...', 'KO...'],
  ['72...', '3....', '109...', '19...', '5...', '154...', '15...', 'KU...'],
  ['71...', '6....', '377...', '97...', '2...', '681...', '68...', 'KA...'],
  ['71...', '25...', '566...', '12...', '5...', '948...', '94...', 'AD...'],
  ['71...', '13...', '143...', '46...', '5...', '221...', '22...', 'ER...'],
];
const lastRow: RowData = ['71...', '21...', '184...', '39...', '6...', '', '', ''];

const headers = ['', 'Kurum Adı', '...', 'Re...', 'D...', 'D...', 'Hu...', 'Geli...', 'Icra Dairesi', '...', 'Taki...', 'B...', 'To...', 'V...', 'M...', '...', '...', '...', '...', '...', 'Topl...', '...', 'Ba...', '...', '...', 'Dosy...', '...', 'Dosya ...', 'Dos...', 'Dos...', 'İşlemler', ''];

const DataRow = ({ r, sel }: { r: RowData; sel?: boolean }) => (
  <Row>
    <Indicator $on={sel} />
    <Cell $sel={sel}>YAPI KREDİ BANKASI</Cell>
    <Cell $sel={sel} $dim>...</Cell>
    <Cell $sel={sel}>{r[0]}</Cell>
    <Cell $sel={sel}>{r[1]}</Cell>
    <Cell $sel={sel}>D...</Cell>
    <Cell $sel={sel}>Çö...</Cell>
    <Cell $sel={sel}>Bir ...</Cell>
    <Cell $sel={sel} $wide>Adana Banka Alacakları İcra Dairesi</Cell>
    <Cell $sel={sel} $dim>...</Cell>
    <Cell $sel={sel} $end>{r[2]}</Cell>
    <Cell $sel={sel} />
    <Cell $sel={sel} $end>{r[3]}</Cell>
    <Cell $sel={sel} />
    <Cell $sel={sel} $end>{r[4]}</Cell>
    {[0, 1, 2, 3, 4].map(i => <Cell key={i} $sel={sel} />)}
    <Cell $sel={sel} $end>{r[5]}</Cell>
    <Cell $sel={sel} $dim>{r[5] && '...'}</Cell>
    <Cell $sel={sel} $end>{r[6]}</Cell>
    <Cell $sel={sel} $dim>{r[5] && '...'}</Cell>
    <Cell $sel={sel} $dim>{r[5] && '...'}</Cell>
    <Cell $sel={sel}>{r[5] && '16.0...'}</Cell>
    <Cell $sel={sel} />
    <Cell $sel={sel}>{r[5] && 'BIREYSEL K...'}</Cell>
    <Cell $sel={sel}>{r[7]}</Cell>
    <Cell $sel={sel} />
    <ActionCell $sel={sel}>
      <SaveArrow />
      <Trash />
    </ActionCell>
  </Row>
);

const EmptyRow = ({ h }: { h: number }) => (
  <Row $tall={h}>
    <Indicator />
    {Array.from({ length: 30 }, (_, i) => <Cell key={i} $plain />)}
  </Row>
);

const menu = ['Dosya Atama', 'Not Bilgisi Ekle', 'Gelişme Durumu Ekle', 'Ödeme Sözü Bilgisi Ekle', 'Telefon Bilgisi Ekle', 'Adres Bilgisi Ekle', 'Borçlu Yakını Ekle', 'Alacak Kalemi Ekle', 'Evrak Bilgisi Ekle', 'Dosyaları İnfaza Düşür'];

const sheetHeaders = ['KurumAdı', 'FöyNo', 'ReferansNo', 'DosyaEkAlan1', 'DosyaEkAlan2', 'DosyaEkAlan3', 'Transfer Tarihi', 'Dosya Durumu'];

export default function App() {
  return (
    <Stage>
      <Global />
      <AppWindow>
        <TitleBar>
          <AdminLogo />
          <TitleText>Admin Paneli</TitleText>
          <WinControls>
            <Minus size={17} strokeWidth={1.2} />
            <Copy size={15} strokeWidth={1.2} />
            <X size={19} strokeWidth={1.2} />
          </WinControls>
        </TitleBar>
        <Body>
          <Sidebar>
            <SideTop>
              <Burger />
              <SearchBox>
                <FlippedSearch size={16} strokeWidth={1.6} />
                İşlem Ara
              </SearchBox>
            </SideTop>
            <MenuScroll>
              <MenuHead $first>Kullanıcı İşlemleri<ChevronDown size={19} strokeWidth={1.5} /></MenuHead>
              <MenuHead>Toplu İşlemler<ChevronDown size={19} strokeWidth={1.5} /></MenuHead>
              <MenuHead $open>Dosya İşlemleri<ChevronUp size={19} strokeWidth={1.5} /></MenuHead>
              <MenuItem $active>Dosya Bilgisi Ekle</MenuItem>
              {menu.map(m => <MenuItem key={m}>{m}</MenuItem>)}
              <MenuHead $last>Diğer İşlemler<ChevronDown size={19} strokeWidth={1.5} /></MenuHead>
            </MenuScroll>
          </Sidebar>
          <Main>
            <Band>Dosya Bilgisini Nasıl Eklemek İstiyorsunuz ?</Band>
            <RadioPanel>
              <RadioOption><RadioDot $on />Excel İle Yükle</RadioOption>
              <RadioOption><RadioDot />Uyap Portal Üzerinden Yükle</RadioOption>
              <RadioOption><RadioDot />El İle Yükle</RadioOption>
            </RadioPanel>
            <FormPanel>
              <FormRow>
                <FormLabel>Excel Şablon Örneği :</FormLabel>
                <SelectBox>SHA Yazılım Şablon Örneği<Caret /></SelectBox>
              </FormRow>
              <FormRow>
                <FormLabel>Avukat :</FormLabel>
                <SelectBox><Caret /></SelectBox>
              </FormRow>
              <FormButton $w={370} $pad={18} $mt={21}><GreenDown /><span>Dosya Bilgisi Eklemek İçin Excel Örneği İndir</span></FormButton>
              <FormButton $w={281} $pad={8} $mt={14}><GlobeUp /><span>Verilerimi Excel İle Sisteme Yükle</span></FormButton>
            </FormPanel>
            <Table>
              <HeadRow>
                {headers.map((h, i) => (
                  <HeadCell key={i} $dim={h === '...'}>
                    {h}
                    {i === 27 && <SortArrow />}
                  </HeadCell>
                ))}
              </HeadRow>
              <TableBody>
                <Rows>
                  {rows.map((r, i) => <DataRow key={i} r={r} sel={i === 0} />)}
                  <EmptyRow h={334} />
                  <DataRow r={lastRow} />
                  <EmptyRow h={10} />
                </Rows>
                <VScroll>
                  <ScrollBtn $h={19} />
                  <ScrollBtn $h={21} $mt={2} />
                  <ScrollBtn $h={15} $down $mt={612} />
                </VScroll>
              </TableBody>
            </Table>
          </Main>
        </Body>
      </AppWindow>

      <Dim />

      <Excel>
        <XTitle>
          <OfficeOrb><OfficeLogo /></OfficeOrb>
          <Qat>
            <Floppy />
            <QatIcon $ml={7}><Undo2 size={17} color="#2f6fbf" strokeWidth={2.6} /></QatIcon>
            ▾
            <QatIcon $ml={9}><Redo2 size={17} color="#aab6c5" strokeWidth={2.4} /></QatIcon>
            ▾
          </Qat>
          <QatExtra>⩮</QatExtra>
          <XTitleText>TaaCallSolutionDosyaExcelOrnegi.xlsx - Microsoft Excel</XTitleText>
          <XControls>
            <Minus size={16} strokeWidth={1} />
            <Square size={14} strokeWidth={1.2} />
            <X size={18} strokeWidth={1} />
          </XControls>
        </XTitle>
        <XTabs>
          <XTab $active $w={48}>Giriş</XTab>
          <XTab $w={54}>Ekle</XTab>
          <XTab $w={102}>Sayfa Düzeni</XTab>
          <XTab $w={82}>Formüller</XTab>
          <XTab $w={52}>Veri</XTab>
          <XTab $w={108}>Gözden Geçir</XTab>
          <XTab $w={82}>Görünüm</XTab>
          <HelpTools>
            <HelpOrb>?</HelpOrb>
            <Minus size={11} strokeWidth={2.5} />
            <Copy size={10} strokeWidth={2.2} />
            <X size={12} strokeWidth={3} />
          </HelpTools>
        </XTabs>
        <Ribbon>
          <Group $w={165}>
            <GroupBody>
              <PasteCol>
                <PasteIcon />
                <PasteText>Yapıştır</PasteText>
                <TinyDown />
              </PasteCol>
              <SmallList>
                <SmallItem><SmallIcon><ScissorsIcon size={15} strokeWidth={1.8} /></SmallIcon>Kes</SmallItem>
                <SmallItem><SmallIcon><DocsIcon /></SmallIcon>Kopyala</SmallItem>
                <SmallItem><SmallIcon><BrushIcon /></SmallIcon>Biçim Boyacısı</SmallItem>
              </SmallList>
            </GroupBody>
            <GroupLabel>Pano<Launcher /></GroupLabel>
          </Group>
          <Group $w={221}>
            <GroupBody $p="11px 0 0 2px">
              <ToolStack>
                <ToolRow $gap={2}>
                  <Combo $w={103}>Calibri<Caret /></Combo>
                  <Combo $w={53}>11<Caret /></Combo>
                  <ToolBox $w={52}>
                    <ToolBtn>A<MiniSup>▴</MiniSup></ToolBtn>
                    <ToolBtn $small>A<MiniSup>▾</MiniSup></ToolBtn>
                  </ToolBox>
                </ToolRow>
                <ToolRow>
                  <ToolBox $w={92}>
                    <ToolBtn>K</ToolBtn>
                    <ToolBtn $italic>T</ToolBtn>
                    <ToolBtn><Underlined>A</Underlined><Arrowlet /></ToolBtn>
                  </ToolBox>
                  <ToolBox $w={40}>
                    <ToolBtn><BorderIcon /><Arrowlet /></ToolBtn>
                  </ToolBox>
                  <ToolBox $w={75}>
                    <ToolBtn><FillBucket /><Arrowlet /></ToolBtn>
                    <ToolBtn>
                      <ColorGlyph>A<ColorBar /></ColorGlyph>
                      <Arrowlet />
                    </ToolBtn>
                  </ToolBox>
                </ToolRow>
              </ToolStack>
            </GroupBody>
            <GroupLabel>Yazı Tipi<Launcher /></GroupLabel>
          </Group>
          <Group $w={289}>
            <GroupBody $p="11px 0 0 2px">
              <ToolStack>
                <ToolRow $gap={4}>
                  <ToolBox $w={79}>
                    <ToolBtn><Lines rows={vAlign(2)} /></ToolBtn>
                    <ToolBtn><Lines rows={vAlign(6)} /></ToolBtn>
                    <ToolBtn $hot><Lines rows={vAlign(9)} /></ToolBtn>
                  </ToolBox>
                  <ToolBox $w={36}><ToolBtn><Orient /><Arrowlet /></ToolBtn></ToolBox>
                </ToolRow>
                <ToolRow $gap={4}>
                  <ToolBox $w={79}>
                    <ToolBtn><Lines rows={hAlign('l')} /></ToolBtn>
                    <ToolBtn><Lines rows={hAlign('c')} /></ToolBtn>
                    <ToolBtn><Lines rows={hAlign('r')} /></ToolBtn>
                  </ToolBox>
                  <ToolBox $w={52}>
                    <ToolBtn><Indent flip /></ToolBtn>
                    <ToolBtn><Indent /></ToolBtn>
                  </ToolBox>
                </ToolRow>
              </ToolStack>
              <VSep />
              <SmallList>
                <SmallItem $h={26}><SmallIcon><WrapIcon /></SmallIcon>Metni Kaydır</SmallItem>
                <SmallItem $h={44}><SmallIcon><MergeIcon /></SmallIcon>Birleştir ve Ortala <Arrowlet /></SmallItem>
              </SmallList>
            </GroupBody>
            <GroupLabel>Hizalama<Launcher /></GroupLabel>
          </Group>
          <Group $w={155}>
            <GroupBody $p="11px 0 0 3px">
              <ToolStack>
                <ToolRow><Combo $w={146}>Metin<Caret /></Combo></ToolRow>
                <ToolRow $gap={4}>
                  <ToolBox $w={91}>
                    <ToolBtn $grow={1.4}><MoneyIcon /><Arrowlet /></ToolBtn>
                    <ToolBtn>%</ToolBtn>
                    <ToolBtn>,</ToolBtn>
                  </ToolBox>
                  <ToolBox $w={51}>
                    <ToolBtn><DecimalGlyph /></ToolBtn>
                    <ToolBtn><DecimalGlyph flip /></ToolBtn>
                  </ToolBox>
                </ToolRow>
              </ToolStack>
            </GroupBody>
            <GroupLabel>Sayı<Launcher /></GroupLabel>
          </Group>
          <Group $w={463}>
            <GroupBody $p="0 0 0 4px">
              <LargeBtn $w={87}>
                <CondIcon />
                <LargeText>Koşullu<span>Biçimlendirme <Arrowlet $inline /></span></LargeText>
              </LargeBtn>
              <LargeBtn $w={87}>
                <TableIcon />
                <LargeText>Tablo Olarak<span>Biçimlendir <Arrowlet $inline /></span></LargeText>
              </LargeBtn>
              <Gallery>
                <Style1 $normal $bg="#fff" $fg="#111">Normal</Style1>
                <Style1 $bg="#c6efce" $fg="#006100">İyi</Style1>
                <Style2 $bg="#ffc7ce" $fg="#9c0006">Kötü</Style2>
                <Style3 $bg="#ffeb9c" $fg="#9c6500">Nötr</Style3>
              </Gallery>
              <GalleryScroll>
                <GalBtn $h={24} />
                <GalBtn $h={20} />
                <GalBtn $h={20} />
              </GalleryScroll>
            </GroupBody>
            <GroupLabel>Stiller</GroupLabel>
          </Group>
          <Group $w={156}>
            <GroupBody $p="0 0 0 2px">
              <LargeBtn $w={50}><CellsInsert /><LargeText>Ekle</LargeText></LargeBtn>
              <LargeBtn $w={50}><CellsDelete /><LargeText>Sil</LargeText></LargeBtn>
              <LargeBtn $w={50}><CellsFormat /><LargeText>Biçim</LargeText></LargeBtn>
            </GroupBody>
            <GroupLabel>Hücreler</GroupLabel>
          </Group>
          <Group $w={282}>
            <GroupBody $p="1px 0 0 6px">
              <SmallList $w={152}>
                <SmallItem $gap={5}><SigmaIcon>Σ</SigmaIcon>Otomatik Toplam <Arrowlet /></SmallItem>
                <SmallItem $gap={5}>
                  <SmallIcon><DolguIcon /></SmallIcon>
                  Dolgu <Arrowlet />
                </SmallItem>
              </SmallList>
              <LargeBtn $w={55}><SortFunnel /></LargeBtn>
              <LargeBtn $w={55} $ml={11}><Binoculars /></LargeBtn>
            </GroupBody>
            <GroupLabel>Düzenleme</GroupLabel>
          </Group>
        </Ribbon>
        <WhiteGap />
        <FormulaBar>
          <NameBox>H3<NameCaret /></NameBox>
          <FxPill>fx</FxPill>
          <FormulaText>DERDEST</FormulaText>
        </FormulaBar>
        <SheetGap />
        <ColHead>
          <ColCell $corner />
          {['A', 'B', 'C', 'D', 'E', 'F', 'G', 'H'].map(c => <ColCell key={c}>{c}</ColCell>)}
        </ColHead>
        <SheetRow>
          <RowNum>1</RowNum>
          {sheetHeaders.map(h => <HeaderCell key={h}><HeaderName>{h}</HeaderName><FilterBtn /></HeaderCell>)}
        </SheetRow>
        <SheetRow>
          <RowNum>2</RowNum>
          <DataCell $big>TURKCELL FİNANSMAN</DataCell>
          <DataCell $tick>1</DataCell>
          <DataCell>12345678</DataCell>
          <DataCell />
          <DataCell />
          <DataCell />
          <DataCell>05.01.2021</DataCell>
          <DataCell>DERDEST</DataCell>
        </SheetRow>
        <SheetTabs>
          <TabNav>
            <NavGlyph $dir="l" $bar />
            <NavGlyph $dir="l" />
            <NavGlyph $dir="r" />
            <NavGlyph $dir="r" $bar />
          </TabNav>
          <SheetTab>DosyaBilgileri</SheetTab>
          <NewTab><NewSheetIcon /></NewTab>
          <HScroll>
            <Splitter />
            <HArrow />
            <HThumb />
          </HScroll>
        </SheetTabs>
        <StatusBar><StatusText>Hazır</StatusText></StatusBar>
      </Excel>

      <Mark $l={226} $t={60} $w={176} $h={45} $s={5} $r={22} />
      <Mark $l={1} $t={233} $w={222} $h={47} $s={5} $r={23} />
      <Mark $l={717} $t={626} $w={427} $h={59} $s={7} $r={26} />

      <Callout>
        <CalloutShape viewBox="0 0 668 260" aria-hidden="true">
          <path
            d="M68 28 L603 5 C638 3 664 30 661 65 L634 235 C630 253 618 263 600 263 L58 263 C40 263 30 245 28 230 L6 85 C3 50 28 30 68 28 Z"
            fill="#f67c30"
            stroke="#004aad"
            strokeWidth="12"
          />
        </CalloutShape>
        <CalloutText>
          Vekil olduğunuz bankaların raporlarını çekebilir
          <br />
          tüm dosyalarınızı taacall a aktarıp
          <br />
          yönetebilirsiniz
        </CalloutText>
      </Callout>
    </Stage>
  );
}
